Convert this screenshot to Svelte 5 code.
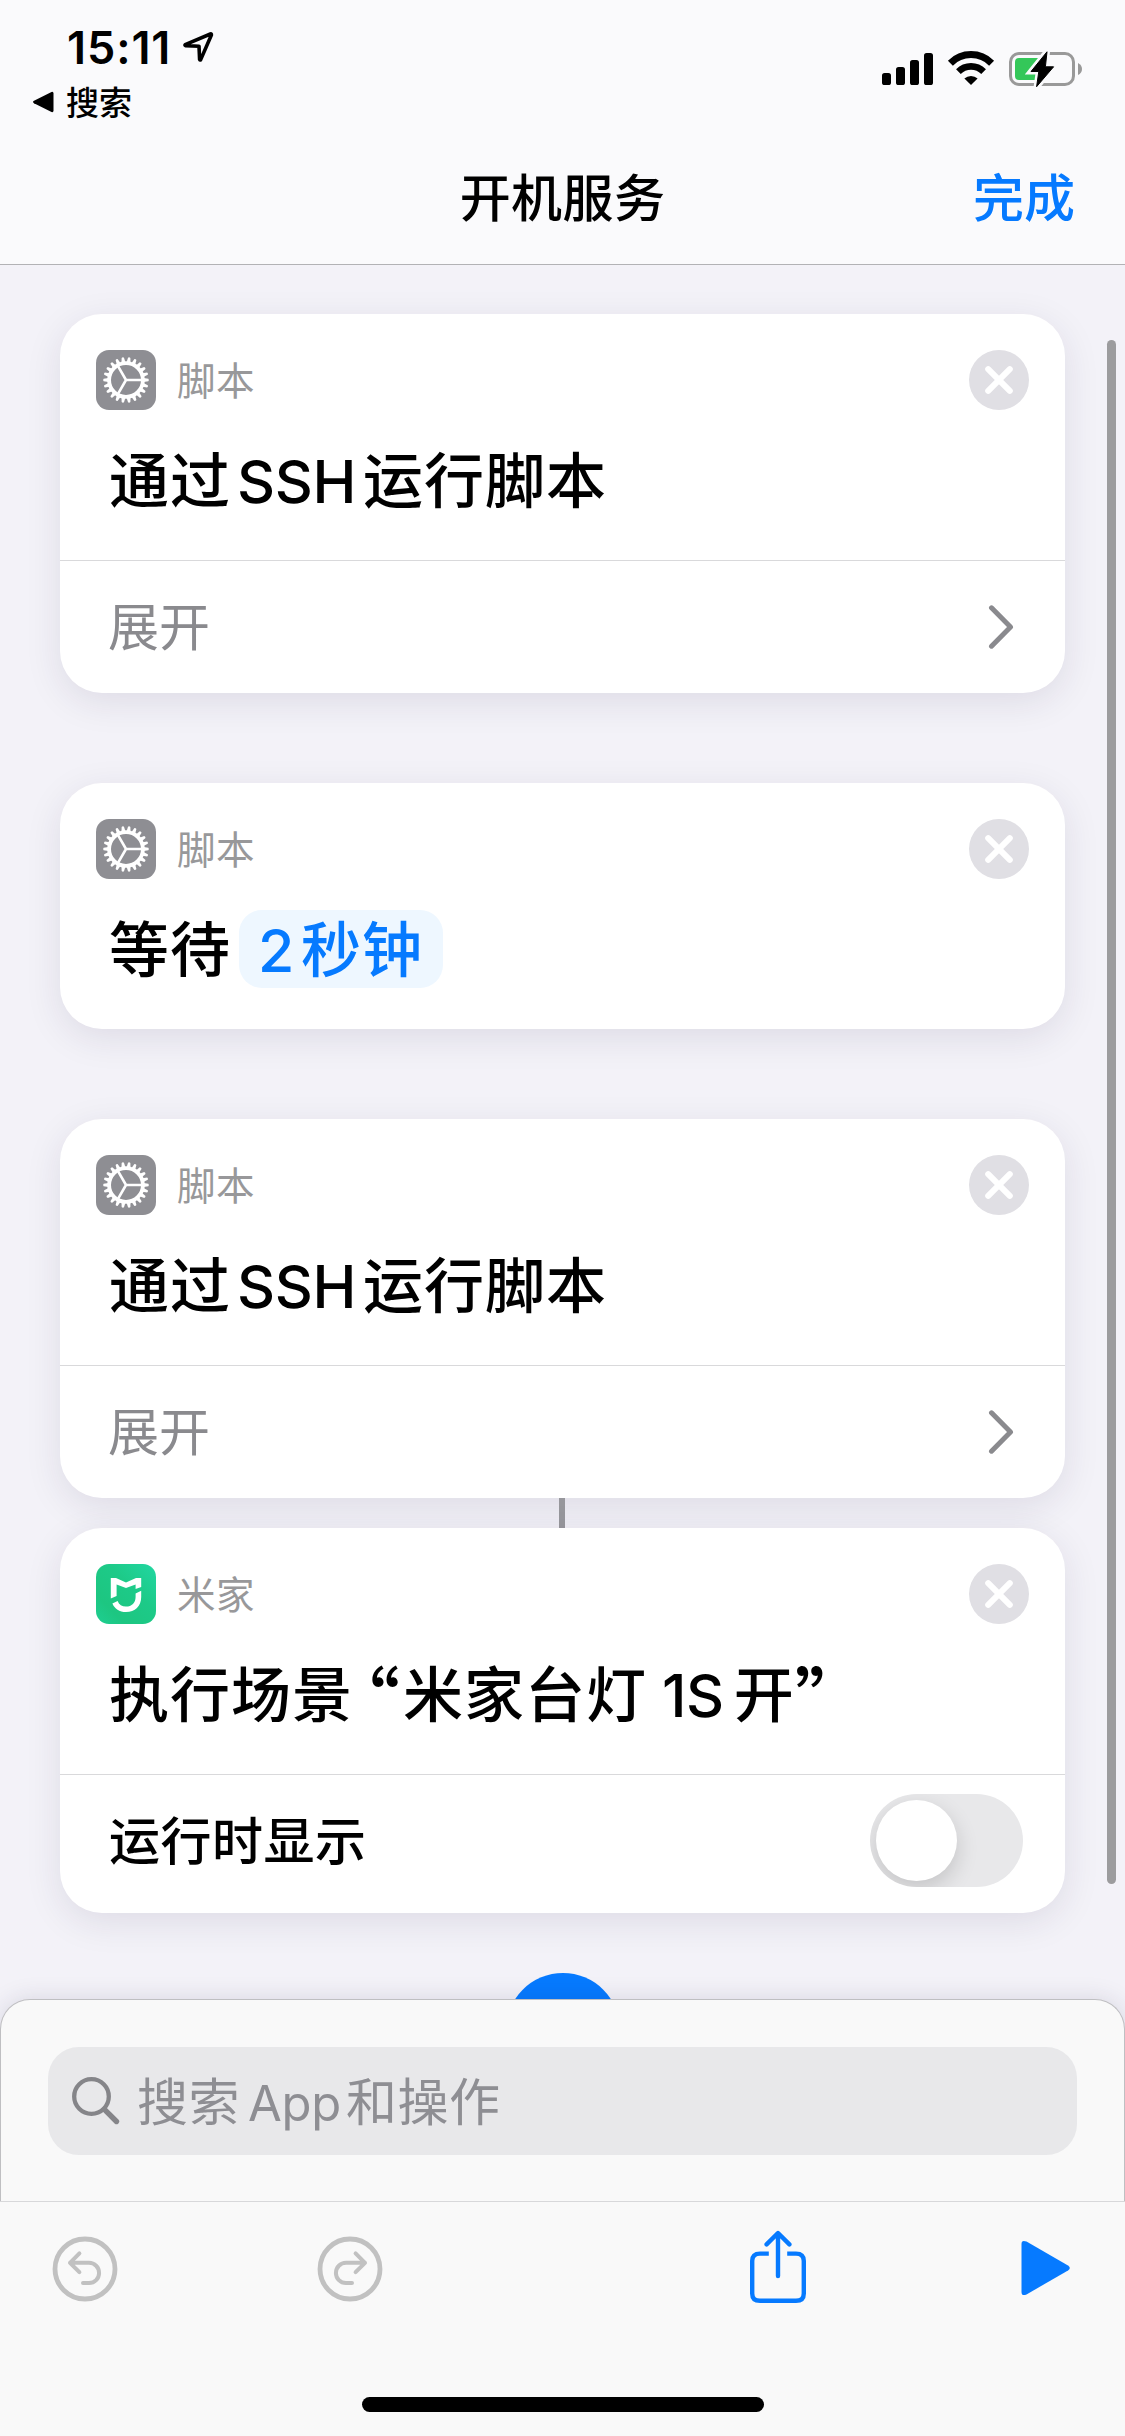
<script lang="ts">
	interface Run {
		text: string;
		latin?: boolean;
		quote?: boolean;
		pill?: boolean;
		gap?: number;
	}

	interface Action {
		id: number;
		app: string;
		icon: 'gear' | 'mijia';
		title: Run[];
		footer?: 'expand' | 'toggle';
		linked?: boolean;
	}

	const sshTitle: Run[] = [
		{ text: '通过' },
		{ text: 'SSH', latin: true, gap: 6 },
		{ text: '运行脚本', gap: 7 }
	];

	const actions: Action[] = [
		{ id: 1, app: '脚本', icon: 'gear', title: sshTitle, footer: 'expand' },
		{
			id: 2,
			app: '脚本',
			icon: 'gear',
			title: [{ text: '等待' }, { text: '2秒钟', pill: true, gap: 8 }]
		},
		{ id: 3, app: '脚本', icon: 'gear', title: sshTitle, footer: 'expand' },
		{
			id: 4,
			app: '米家',
			icon: 'mijia',
			title: [
				{ text: '执行场景' },
				{ text: '“', quote: true, gap: 11 },
				{ text: '米家台灯', gap: 3 },
				{ text: '1S', latin: true, gap: 15 },
				{ text: '开', gap: 10 },
				{ text: '”', quote: true, gap: 0 }
			],
			footer: 'toggle',
			linked: true
		}
	];

	const teeth = Array.from({ length: 22 }, (_, i) => (i * 360) / 22);

	let showWhenRun = $state(false);
</script>

<div class="screen">
	<header>
		<div class="status">
			<div class="status-left">
				<div class="time">
					<span>15:11</span>
					<svg width="32" height="32" viewBox="0 0 32 32">
						<path d="M28.4 3 L3.2 13.6 Q2.6 14.3 3.4 14.6 L17 15.2 L17.6 28.4 Q18 29.6 18.7 28.6 L29.4 4 Q29.6 2.6 28.4 3 Z" fill="none" stroke="#000" stroke-width="3.6" stroke-linejoin="round" />
					</svg>
				</div>
				<div class="back">
					<svg width="22" height="22" viewBox="0 0 22 22">
						<path d="M2 9.8 L19.5 1 Q21.5 0.4 21.5 2.4 V19.6 Q21.5 21.6 19.5 21 L2 12.2 Q0 11 2 9.8 Z" />
					</svg>
					<span>搜索</span>
				</div>
			</div>
			<div class="status-right">
				<svg width="202" height="36" viewBox="0 0 202 36">
					<rect x="0" y="22" width="9" height="12" rx="2.6" />
					<rect x="14" y="16" width="9" height="18" rx="2.6" />
					<rect x="28" y="9" width="9" height="25" rx="2.6" />
					<rect x="42" y="2" width="9" height="32" rx="2.6" />
					<g fill="none" stroke="#000">
						<path d="M68.4 12.2 A29 29 0 0 1 109.6 12.2" stroke-width="7" />
						<path d="M76.4 20.6 A17.8 17.8 0 0 1 101.6 20.6" stroke-width="6.6" />
					</g>
					<path d="M89 34 L82.4 27.6 A9.6 9.6 0 0 1 95.6 27.6 Z" />
					<rect x="128.5" y="2.5" width="63" height="31" rx="8.5" fill="none" stroke="#999" stroke-width="3" />
					<rect x="133" y="7" width="29" height="22" rx="4" fill="#34c759" />
					<path d="M196 12 Q200 14 200 18 T196 24 Z" fill="#999" />
					<path d="M165 0.5 L149 20.5 H156.8 L154.6 36 L171.6 15.8 H163.4 Z" stroke="#fafafc" stroke-width="6" />
					<path d="M165 0.8 L149 20.5 H156.8 L154.6 35.7 L171.6 15.8 H163.4 Z" stroke="#000" stroke-width="1" stroke-linejoin="round" />
				</svg>
			</div>
		</div>
		<nav>
			<span></span>
			<h1>开机服务</h1>
			<button type="button" class="done">完成</button>
		</nav>
	</header>

	<main>
		{#each actions as action (action.id)}
			{#if action.linked}
				<div class="link"></div>
			{/if}
			<section class="card" class:linked={action.linked}>
				<div class="card-head">
					{#if action.icon === 'gear'}
						<svg class="app-icon" viewBox="0 0 60 60">
							<rect width="60" height="60" rx="13" fill="#8e8e93" />
							<g transform="translate(30 30)" stroke="#fff" fill="none">
								<circle r="16.9" stroke-width="3.8" />
								{#each teeth as angle}
									<path d="M17.5 -2 L22.4 -1.2 Q23.3 0 22.4 1.2 L17.5 2 Z" transform="rotate({angle})" fill="#fff" stroke="none" />
								{/each}
								<path d="M0 0 H16 M0 0 L-8 -13.9 M0 0 L-8 13.9" stroke-width="2.6" />
							</g>
						</svg>
					{:else}
						<svg class="app-icon" viewBox="0 0 60 60">
							<defs>
								<linearGradient id="mijia" x1="0" y1="1" x2="1" y2="0">
									<stop offset="0" stop-color="#1ecf92" />
									<stop offset="0.25" stop-color="#1dc681" />
									<stop offset="0.6" stop-color="#1dca88" />
									<stop offset="1" stop-color="#21d7a2" />
								</linearGradient>
							</defs>
							<rect width="60" height="60" rx="13" fill="url(#mijia)" />
							<path d="M14.8 14 H20 L30 18.6 L40 14 H45.2 V23 L39.6 25 V20.4 L30 24 L20.6 20.4 V32 L14.8 34.6 Z" fill="#fff" />
							<path d="M45.2 26.8 V33 C45.2 42 39 48 30 48 C23.4 48 18.6 44.8 16.4 39.4 L21.6 37 C23 40.6 26 42.6 30 42.6 C35.8 42.6 39.6 38.8 39.6 33 V29.4 Z" fill="#fff" />
						</svg>
					{/if}
					<span class="app-name">{action.app}</span>
					<button type="button" class="close" aria-label="删除">
						<svg width="60" height="60" viewBox="0 0 60 60">
							<circle cx="30" cy="30" r="30" fill="#e0dfe4" />
							<path d="M19.2 19.2 L40.8 40.8 M40.8 19.2 L19.2 40.8" stroke="#fff" stroke-width="6" stroke-linecap="round" />
						</svg>
					</button>
				</div>
				<div class="title">
					{#each action.title as run}
						<span class:latin={run.latin} class:quote={run.quote} class:pill={run.pill} style="margin-left: {run.gap ?? 0}px">{#if run.pill}<span class="latin number">2</span>秒钟{:else}{run.text}{/if}</span>
					{/each}
				</div>
				{#if action.footer === 'expand'}
					<div class="row expand">
						<span class="row-label">展开</span>
						<svg width="26" height="46" viewBox="0 0 26 46">
							<path d="M3.5 3.8 L22.5 23 L3.5 42.2" fill="none" stroke="#8a8a8e" stroke-width="5" stroke-linecap="round" stroke-linejoin="round" />
						</svg>
					</div>
				{:else if action.footer === 'toggle'}
					<div class="row option">
						<span class="row-label">运行时显示</span>
						<button
							type="button"
							class="switch"
							class:on={showWhenRun}
							role="switch"
							aria-checked={showWhenRun}
							aria-label="运行时显示"
							onclick={() => (showWhenRun = !showWhenRun)}
						>
							<span class="knob"></span>
						</button>
					</div>
				{/if}
			</section>
		{/each}
		<div class="add"></div>
		<div class="scrollbar"></div>
	</main>

	<div class="sheet">
		<div class="search">
			<svg width="50" height="50" viewBox="0 0 50 50" fill="none" stroke="#858589" stroke-linecap="round">
				<circle cx="20.5" cy="20.5" r="17.3" stroke-width="4.3" />
				<path d="M33.4 33.4 L45.5 45.5" stroke-width="5.4" />
			</svg>
			<div class="placeholder">
				<span>搜索</span><span class="latin">App</span><span>和操作</span>
			</div>
		</div>
	</div>

	<footer>
		<div class="tools">
			<svg class="undo" width="66" height="66" viewBox="0 0 66 66" fill="none" stroke="#c1c1c1" stroke-linecap="round" stroke-linejoin="round">
				<circle cx="33" cy="33" r="30" stroke-width="4.8" />
				<path d="M27.4 17.4 L18 26.8 L27.4 36.2 M18 26.8 H37 A10.1 10.1 0 0 1 37 47 H31" stroke-width="4" />
			</svg>
			<svg class="redo" width="66" height="66" viewBox="0 0 66 66" fill="none" stroke="#c1c1c1" stroke-linecap="round" stroke-linejoin="round">
				<circle cx="33" cy="33" r="30" stroke-width="4.8" />
				<path d="M38.6 17.4 L48 26.8 L38.6 36.2 M48 26.8 H29 A10.1 10.1 0 0 0 29 47 H35" stroke-width="4" />
			</svg>
			<svg class="share" width="58" height="74" viewBox="0 0 58 74" fill="none" stroke="#067aff" stroke-width="4.4">
				<path d="M19.8 23.6 H11 Q3.2 23.6 3.2 31 V63.4 Q3.2 70.8 11 70.8 H47 Q54.8 70.8 54.8 63.4 V31 Q54.8 23.6 47 23.6 H38.2" />
				<path d="M29 3.6 V46 M17.6 14.4 L29 3 L40.4 14.4" stroke-linecap="round" stroke-linejoin="round" />
			</svg>
			<svg class="play" width="50" height="56" viewBox="0 0 50 56">
				<path d="M0.5 4 Q0.5 -0.6 5.5 1.6 L47 25.4 Q50.6 28 47 30.6 L5.5 54.4 Q0.5 56.6 0.5 52 Z" fill="#067aff" />
			</svg>
		</div>
		<div class="home"></div>
	</footer>
</div>

<style>
	:global(body) {
		margin: 0;
	}

	.screen {
		display: flex;
		flex-direction: column;
		width: 1125px;
		height: 2436px;
		overflow: hidden;
		background: #f3f2f8;
		color: #000;
		font-family: Inter, 'Noto Sans CJK SC', sans-serif;
	}

	button {
		padding: 0;
		border: none;
		background: none;
		font: inherit;
		cursor: pointer;
	}

	svg {
		display: block;
		flex: none;
	}

	.latin {
		font-family: Inter, sans-serif;
		letter-spacing: 0;
	}

	/* half-width forms, the full-width marks leave a hole beside the name */
	.quote {
		font-size: 72px;
		line-height: 60px;
		font-feature-settings: 'halt';
		letter-spacing: 0;
		transform: translateY(10px);
	}

	header {
		box-sizing: border-box;
		height: 265px;
		flex: none;
		background: #fafafc;
		border-bottom: 1px solid #b2b2b5;
	}

	.status {
		display: flex;
		justify-content: space-between;
		height: 132px;
	}

	.status-left {
		padding: 20px 0 0 32px;
	}

	.time {
		display: flex;
		align-items: center;
		gap: 11px;
		height: 54px;
		padding-left: 35px;
		font-size: 45px;
		font-weight: 600;
		letter-spacing: 0.9px;
	}

	.back {
		display: flex;
		align-items: center;
		gap: 12px;
		height: 56px;
		font-family: 'Noto Sans CJK SC', sans-serif;
		font-size: 33px;
		font-weight: 500;
	}

	.back span {
		padding-bottom: 2px;
	}

	.status-right {
		padding: 51px 41px 0 0;
	}

	nav {
		display: grid;
		grid-template-columns: 1fr auto 1fr;
		align-items: center;
		height: 126px;
		padding: 0 50px;
		font-family: 'Noto Sans CJK SC', sans-serif;
	}

	h1 {
		margin: 0;
		font-size: 51px;
		font-weight: 500;
		letter-spacing: 0.4px;
	}

	.done {
		justify-self: end;
		color: #067aff;
		font-size: 51px;
		font-weight: 500;
	}

	main {
		position: relative;
		display: flex;
		flex-direction: column;
		align-items: center;
		height: 1734px;
		padding-top: 49px;
		box-sizing: border-box;
		flex: none;
	}

	.card {
		width: 1005px;
		flex: none;
		margin-bottom: 90px;
		border-radius: 42px;
		background: #fff;
		box-shadow: 0 9px 36px rgba(40, 30, 70, 0.1);
	}

	.card:has(+ .link) {
		margin-bottom: 0;
	}

	.link {
		width: 6px;
		height: 30px;
		margin-right: 1px;
		flex: none;
		background: #97979c;
	}

	.card.linked {
		margin-bottom: 60px;
	}

	.card-head {
		display: flex;
		align-items: center;
		height: 60px;
		padding: 36px 36px 0;
	}

	.app-icon {
		width: 60px;
		height: 60px;
	}

	.app-name {
		margin-left: 21px;
		padding-bottom: 5px;
		color: #98989a;
		font-family: 'Noto Sans CJK SC', sans-serif;
		font-size: 38.5px;
		font-weight: 400;
		letter-spacing: 0.5px;
	}

	.close {
		margin-left: auto;
	}

	.title {
		display: flex;
		align-items: baseline;
		height: 90px;
		padding: 22px 48px 38px 49px;
		font-family: 'Noto Sans CJK SC', sans-serif;
		font-size: 60px;
		font-weight: 500;
		line-height: 90px;
		letter-spacing: 1px;
		white-space: nowrap;
	}

	.title .latin {
		font-size: 59px;
		letter-spacing: -0.4px;
	}

	.pill {
		height: 78px;
		padding: 0 20px 0 19px;
		border-radius: 23px;
		background: #eef7ff;
		color: #067aff;
		line-height: 72px;
	}

	.number {
		margin-right: 7px;
	}

	.row {
		display: flex;
		align-items: center;
		justify-content: space-between;
		box-sizing: border-box;
		border-top: 1px solid #d9d9db;
		font-family: 'Noto Sans CJK SC', sans-serif;
		font-size: 51px;
	}

	.row-label {
		padding-bottom: 6px;
	}

	.expand {
		height: 133px;
		padding: 0 51px 0 48px;
		color: #8a8a8e;
		font-weight: 400;
	}

	.option {
		height: 139px;
		padding: 0 42px 7px 49px;
		font-weight: 500;
		letter-spacing: 0.5px;
	}

	.switch {
		display: flex;
		width: 153px;
		height: 93px;
		padding: 6px;
		box-sizing: border-box;
		border-radius: 47px;
		background: #e8e8ea;
		overflow: hidden;
	}

	.switch.on {
		justify-content: flex-end;
		background: #34c759;
	}

	.knob {
		width: 81px;
		height: 81px;
		border-radius: 50%;
		background: #fff;
		box-shadow: 0 8px 22px rgba(0, 0, 0, 0.16);
	}

	.add {
		width: 114px;
		height: 114px;
		flex: none;
		border-radius: 50%;
		background: #067aff;
	}

	.scrollbar {
		position: absolute;
		top: 75px;
		right: 9px;
		width: 9px;
		height: 1544px;
		border-radius: 5px;
		background: #9c9c9e;
	}

	.sheet {
		position: relative;
		box-sizing: border-box;
		height: 202px;
		flex: none;
		padding: 47px 47px 0;
		border: 1px solid #bfbfc2;
		border-bottom: none;
		border-radius: 30px 30px 0 0;
		background: #f9f9f9;
		box-shadow: 0 0 24px rgba(40, 30, 70, 0.13);
	}

	.search {
		display: flex;
		align-items: center;
		gap: 16px;
		height: 108px;
		padding-left: 23px;
		border-radius: 31px;
		background: #e8e8ea;
	}

	.placeholder {
		display: flex;
		align-items: baseline;
		padding-bottom: 4px;
		color: #8e8e93;
		font-family: 'Noto Sans CJK SC', sans-serif;
		font-size: 51px;
		font-weight: 400;
		letter-spacing: 0.5px;
	}

	.placeholder .latin {
		margin: 0 5px 0 8px;
		font-size: 49px;
		letter-spacing: -0.3px;
	}

	footer {
		position: relative;
		display: flex;
		flex-direction: column;
		align-items: center;
		justify-content: space-between;
		box-sizing: border-box;
		height: 235px;
		padding: 28px 0 24px;
		border-top: 1px solid #d8d8da;
		background: #f9f9f9;
	}

	.tools {
		display: flex;
		align-items: center;
		align-self: stretch;
		height: 74px;
		padding-left: 51.5px;
	}

	.undo,
	.redo {
		margin-top: 3px;
	}

	.redo {
		margin-left: 199.5px;
	}

	.share {
		margin-left: 365.5px;
	}

	.play {
		margin: 1px 0 0 214px;
	}

	.home {
		width: 402px;
		height: 15px;
		border-radius: 8px;
		background: #000;
	}
</style>
